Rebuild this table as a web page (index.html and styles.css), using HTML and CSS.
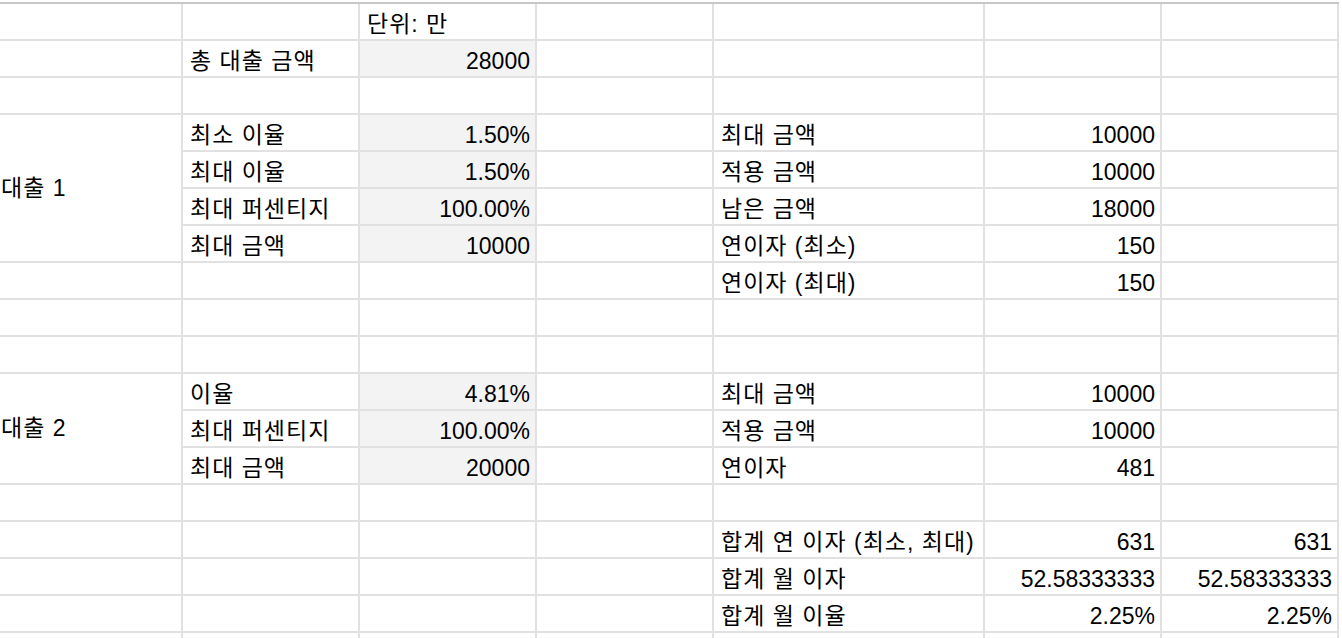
FILE: index.html
```html
<!DOCTYPE html>
<html lang="ko">
<head>
<meta charset="utf-8">
<title>대출 계산</title>
<link rel="stylesheet" href="styles.css">
</head>
<body>
<div class="sheet">
  <!-- row 1 -->
  <div class="c"></div><div class="c"></div><div class="c lbl">단위: 만</div><div class="c"></div><div class="c"></div><div class="c"></div><div class="c"></div>
  <!-- row 2 -->
  <div class="c"></div><div class="c lbl">총 대출 금액</div><div class="c num in">28000</div><div class="c"></div><div class="c"></div><div class="c"></div><div class="c"></div>
  <!-- row 3 -->
  <div class="c"></div><div class="c"></div><div class="c"></div><div class="c"></div><div class="c"></div><div class="c"></div><div class="c"></div>
  <!-- rows 4-7 -->
  <div class="c lbl merge4">대출 1</div><div class="c lbl">최소 이율</div><div class="c num in">1.50%</div><div class="c"></div><div class="c lbl">최대 금액</div><div class="c num">10000</div><div class="c"></div>
  <div class="c lbl">최대 이율</div><div class="c num in">1.50%</div><div class="c"></div><div class="c lbl">적용 금액</div><div class="c num">10000</div><div class="c"></div>
  <div class="c lbl">최대 퍼센티지</div><div class="c num in">100.00%</div><div class="c"></div><div class="c lbl">남은 금액</div><div class="c num">18000</div><div class="c"></div>
  <div class="c lbl">최대 금액</div><div class="c num in">10000</div><div class="c"></div><div class="c lbl">연이자 (최소)</div><div class="c num">150</div><div class="c"></div>
  <!-- row 8 -->
  <div class="c"></div><div class="c"></div><div class="c"></div><div class="c"></div><div class="c lbl">연이자 (최대)</div><div class="c num">150</div><div class="c"></div>
  <!-- rows 9-10 -->
  <div class="c"></div><div class="c"></div><div class="c"></div><div class="c"></div><div class="c"></div><div class="c"></div><div class="c"></div>
  <div class="c"></div><div class="c"></div><div class="c"></div><div class="c"></div><div class="c"></div><div class="c"></div><div class="c"></div>
  <!-- rows 11-13 -->
  <div class="c lbl merge3">대출 2</div><div class="c lbl">이율</div><div class="c num in">4.81%</div><div class="c"></div><div class="c lbl">최대 금액</div><div class="c num">10000</div><div class="c"></div>
  <div class="c lbl">최대 퍼센티지</div><div class="c num in">100.00%</div><div class="c"></div><div class="c lbl">적용 금액</div><div class="c num">10000</div><div class="c"></div>
  <div class="c lbl">최대 금액</div><div class="c num in">20000</div><div class="c"></div><div class="c lbl">연이자</div><div class="c num">481</div><div class="c"></div>
  <!-- row 14 -->
  <div class="c"></div><div class="c"></div><div class="c"></div><div class="c"></div><div class="c"></div><div class="c"></div><div class="c"></div>
  <!-- rows 15-17 -->
  <div class="c"></div><div class="c"></div><div class="c"></div><div class="c"></div><div class="c lbl">합계 연 이자 (최소, 최대)</div><div class="c num">631</div><div class="c num">631</div>
  <div class="c"></div><div class="c"></div><div class="c"></div><div class="c"></div><div class="c lbl">합계 월 이자</div><div class="c num">52.58333333</div><div class="c num">52.58333333</div>
  <div class="c"></div><div class="c"></div><div class="c"></div><div class="c"></div><div class="c lbl">합계 월 이율</div><div class="c num">2.25%</div><div class="c num">2.25%</div>
  <!-- row 18 -->
  <div class="c"></div><div class="c"></div><div class="c"></div><div class="c"></div><div class="c"></div><div class="c"></div><div class="c"></div>
</div>
</body>
</html>
```

FILE: styles.css
```css
html, body {
  margin: 0;
  padding: 0;
  background: #ffffff;
  overflow: hidden;
}

.sheet {
  margin-top: 2px;
  border-top: 2px solid #c7c7c7;
  display: grid;
  grid-template-columns: 183px 177px 177px 177px 271px 177px 177px;
  grid-auto-rows: 37px;
  width: 1339px;
  font-family: "Liberation Sans", "Noto Sans CJK KR", sans-serif;
  font-size: 23px;
  line-height: 23px;
  color: #000000;
}

.c {
  box-sizing: border-box;
  border-right: 2px solid #e1e1e1;
  border-bottom: 2px solid #e1e1e1;
  display: flex;
  align-items: flex-end;
  justify-content: flex-start;
  padding: 0 5px 3px 7px;
  white-space: nowrap;
  overflow: hidden;
}

.lbl {
  letter-spacing: 1px;
}

.num {
  justify-content: flex-end;
}

.in {
  background: #f3f3f3;
}

.merge4 {
  grid-row: span 4;
  align-items: center;
  padding: 0 5px 0 1px;
}

.merge3 {
  grid-row: span 3;
  align-items: center;
  padding: 0 5px 0 1px;
}
```
